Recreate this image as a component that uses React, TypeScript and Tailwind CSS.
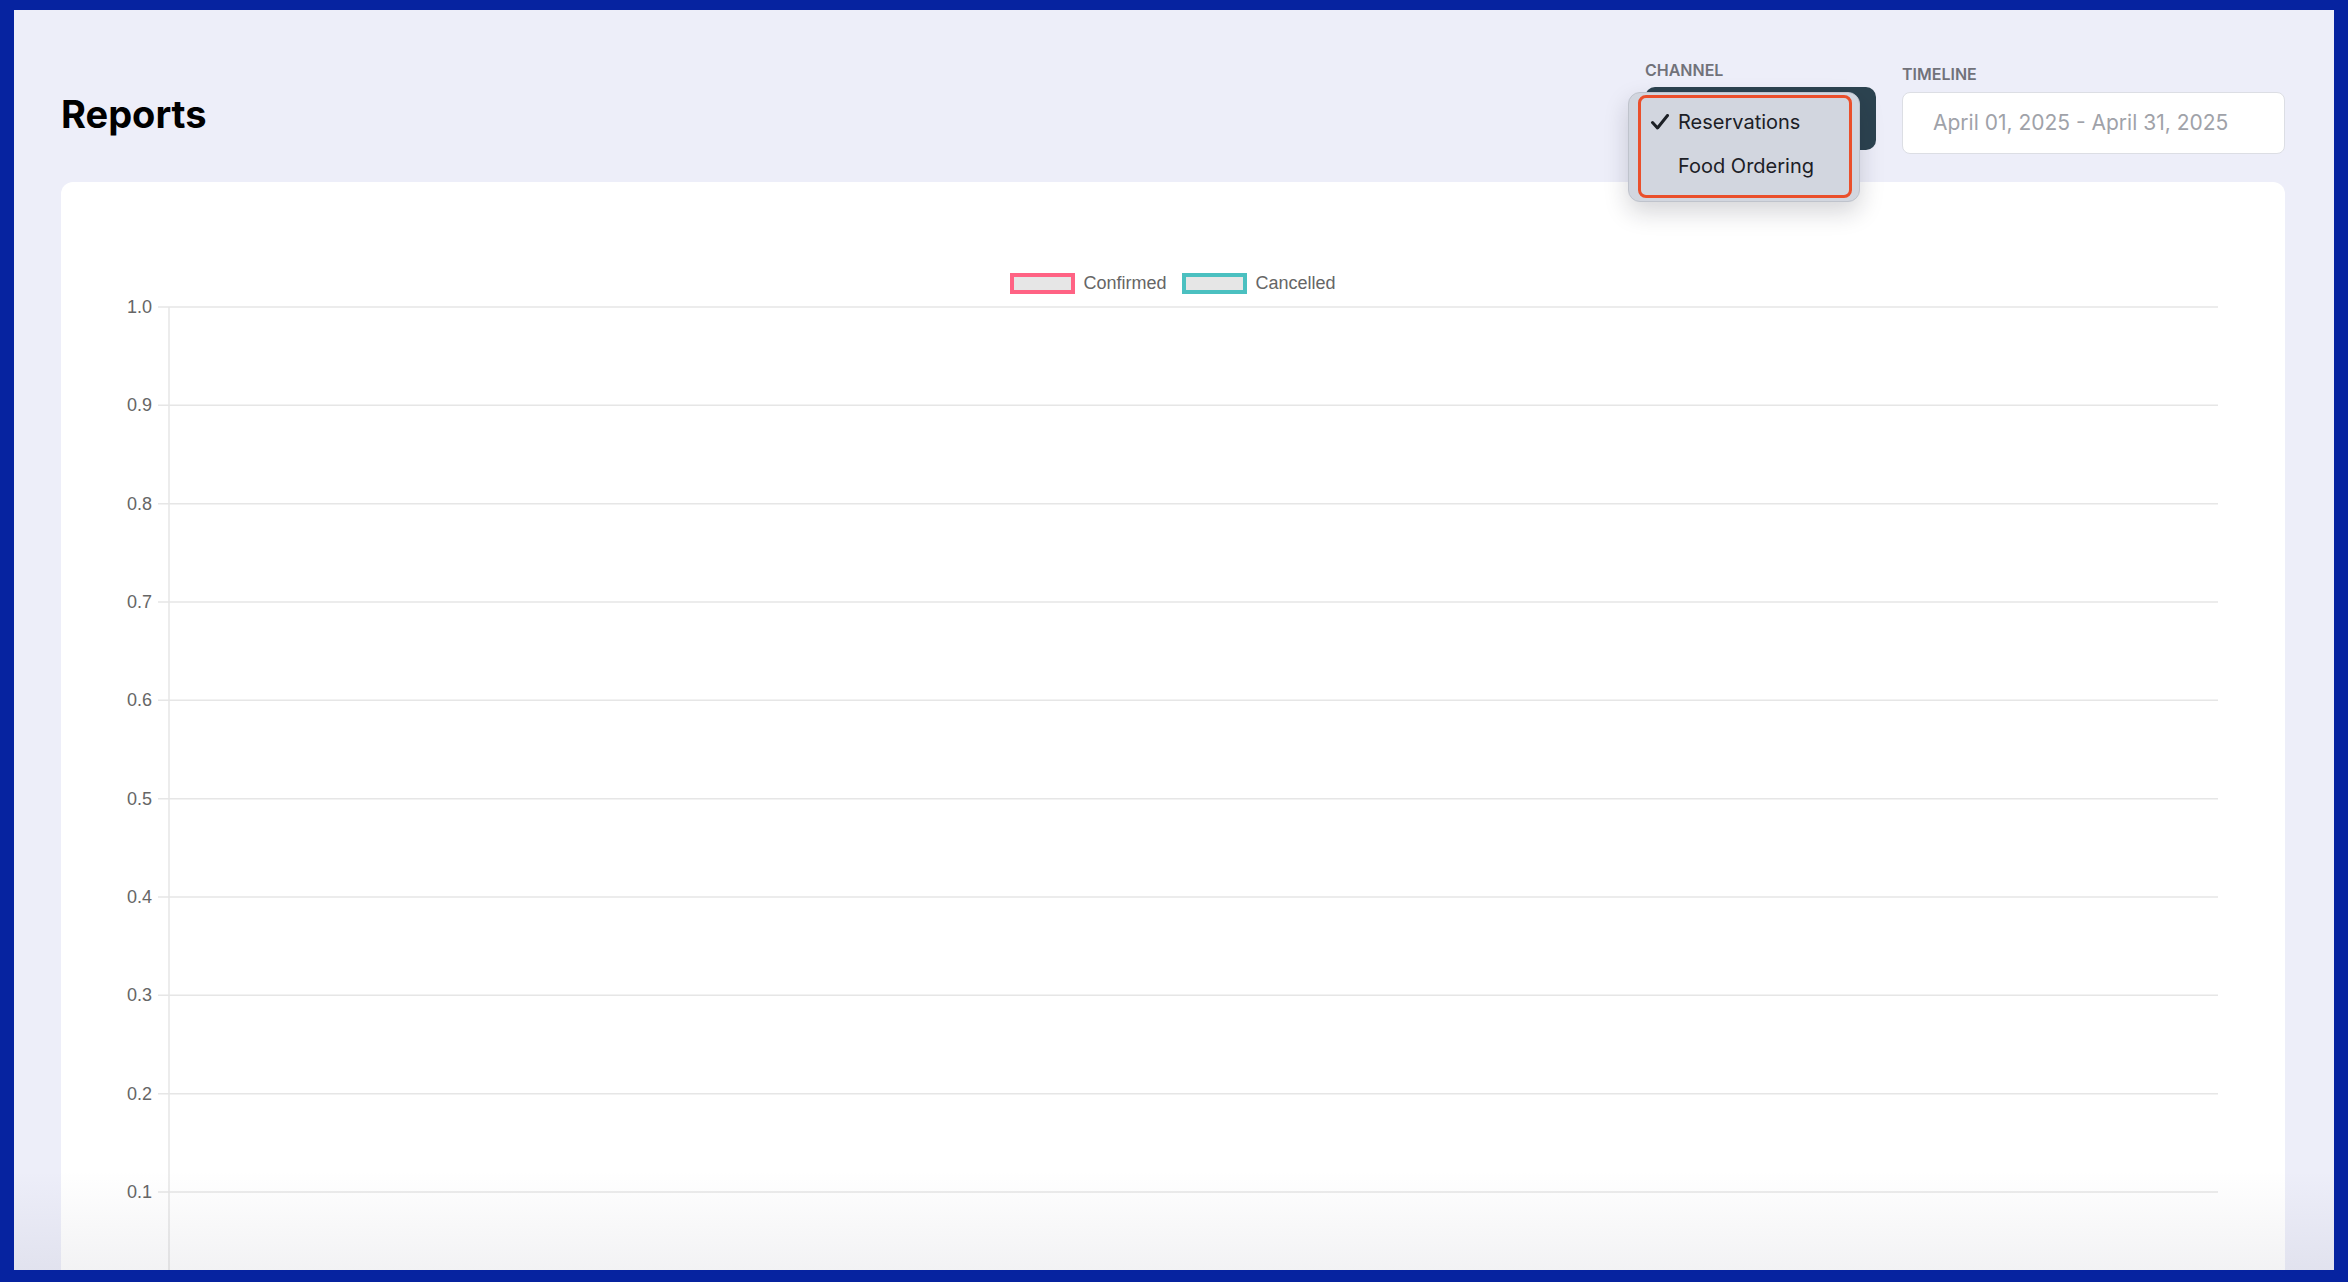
import React from 'react';

const ticks = ['1.0', '0.9', '0.8', '0.7', '0.6', '0.5', '0.4', '0.3', '0.2', '0.1'];
const STEP = 98.33;
const TOP = 13;

function Check() {
  return (
    <svg width="20" height="16" viewBox="0 0 20 16" className="shrink-0">
      <path d="M2.5 8.5 L7.5 14 L17.5 1.5" fill="none" stroke="#1c2026" strokeWidth="3" strokeLinecap="round" strokeLinejoin="round" />
    </svg>
  );
}

function ChannelMenu() {
  return (
    <div className="absolute left-[-17px] top-[32px] z-10 h-[110px] w-[232px] rounded-[12px] border border-[#bfc3cc] bg-[#d2d6df] pt-[2px] pl-[9px] pr-[7px] pb-[3px] shadow-[0_10px_24px_rgba(20,24,40,0.18)]">
      <div className="h-full w-full rounded-[8px] border-[3px] border-[#ea4f2b] pt-[2px]">
        <div className="flex h-[44px] items-center pl-[9px] text-[20px] leading-[44px] text-[#1c2026]">
          <Check />
          <span className="ml-[8px]">Reservations</span>
        </div>
        <div className="flex h-[44px] items-center pl-[9px] text-[20px] leading-[44px] text-[#1c2026]">
          <span className="w-[20px] shrink-0" />
          <span className="ml-[8px]">Food Ordering</span>
        </div>
      </div>
    </div>
  );
}

function LegendItem({ label, color }: { label: string; color: string }) {
  return (
    <div className="flex items-center">
      <span className={`h-[21px] w-[65px] border-[4px] bg-[#e6e6e6] ${color}`} />
      <span className="ml-[8px] text-[18px] leading-[21px] text-[#666666]">{label}</span>
    </div>
  );
}

function Chart() {
  return (
    <svg width="2224" height="1000" className="block" style={{ fontFamily: '"Liberation Sans", Arial, sans-serif' }}>
      {ticks.map((t, i) => {
        const y = TOP + i * STEP;
        return (
          <g key={t}>
            <line x1="97" x2="2157" y1={y} y2={y} stroke="#e6e6e6" strokeWidth="1.5" />
            <text x="91" y={y} textAnchor="end" dominantBaseline="central" fontSize="18" fill="#666666">
              {t}
            </text>
          </g>
        );
      })}
      <line x1="108" x2="108" y1={TOP} y2="1000" stroke="#e6e6e6" strokeWidth="1.5" />
    </svg>
  );
}

export default function App() {
  return (
    <div className="h-[1282px] w-full overflow-hidden bg-[#0623a0] px-[14px] pt-[10px]">
      <div
        className="relative h-[1260px] overflow-hidden bg-[#edeef9] pl-[47px] pr-[49px]"
        style={{ fontFamily: 'Inter, "Noto Sans", sans-serif' }}
      >
        <header className="flex items-start justify-between pt-[50px]">
          <h1 className="mt-[32px] text-[38px] font-bold leading-[44px] text-black">Reports</h1>

          <div className="flex items-start gap-[26px]">
            {/* Channel select, menu open */}
            <div className="relative w-[231px]">
              <div className="mb-[7px] text-[16px] font-semibold leading-[20px] text-[#71727a]">CHANNEL</div>
              <div className="h-[63px] rounded-[10px] bg-[#2c4350]" />
              <ChannelMenu />
            </div>

            {/* Timeline */}
            <div className="w-[383px] pt-[4px]">
              <div className="mb-[8px] text-[16px] font-semibold leading-[20px] text-[#71727a]">TIMELINE</div>
              <div className="flex h-[62px] items-center rounded-[8px] border-[1.5px] border-[#dcdee4] bg-white pl-[30px] text-[21px] text-[#9fa2a9]">
                April 01, 2025 - April 31, 2025
              </div>
            </div>
          </div>
        </header>

        <section className="mt-[28px] h-[1200px] rounded-[12px] bg-white">
          <div className="flex justify-center gap-[16px] pt-[91px]" style={{ fontFamily: '"Liberation Sans", Arial, sans-serif' }}>
            <LegendItem label="Confirmed" color="border-[#ff6384]" />
            <LegendItem label="Cancelled" color="border-[#4bc0c0]" />
          </div>
          <Chart />
        </section>

        {/* bottom fade of the capture */}
        <div className="pointer-events-none absolute inset-x-0 bottom-0 h-[100px] bg-gradient-to-b from-transparent to-[rgba(40,40,70,0.06)]" />
      </div>
    </div>
  );
}
